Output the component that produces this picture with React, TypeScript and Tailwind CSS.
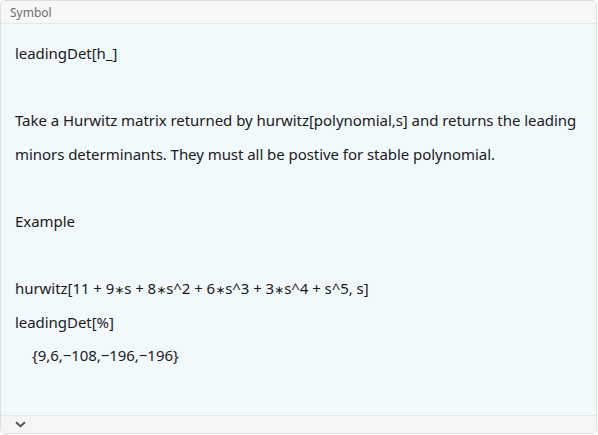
import React from 'react';

// small centred star used by the notebook for multiplication
const Star = () => <span className="font-['DejaVu_Sans',sans-serif] text-[12px]">∗</span>;

const App: React.FC = () => {
  const row = 'h-[33.6px] leading-[33.6px] whitespace-pre';

  return (
    <div className="w-[598px] h-[435px] bg-white">
      <div className="w-[597px] h-[434px] flex flex-col border border-[#dedede] rounded-[5px] overflow-hidden font-['Noto_Sans',sans-serif]">
        {/* Header */}
        <div className="h-[23px] shrink-0 bg-[#f7f7f7] border-b border-[#e4e8ea] flex items-center pl-[9px] pt-[2px]">
          <span className="text-[12px] text-[#6e6e6e]">Symbol</span>
        </div>

        {/* Body */}
        <div className="flex-1 bg-[#f2f9fd] pl-[14px] pt-[13px] text-[15px] text-[#1a1a1a] tracking-[-0.05px]">
          <div className={row}>leadingDet[h_]</div>
          <div className={row}></div>
          <div className={row}>Take a Hurwitz matrix returned by hurwitz[polynomial,s] and returns the leading</div>
          <div className={row}>minors determinants. They must all be postive for stable polynomial.</div>
          <div className={row}></div>
          <div className={row}>Example</div>
          <div className={row}></div>
          <div className={row}>
            hurwitz[11 + 9<Star />s + 8<Star />s^2 + 6<Star />s^3 + 3<Star />s^4 + s^5, s]
          </div>
          <div className={row}>leadingDet[%]</div>
          <div className={`${row} pl-[17px]`}>{'{9,6,−108,−196,−196}'}</div>
        </div>

        {/* Footer */}
        <div className="h-[18px] shrink-0 bg-[#f5f5f5] border-t border-[#e4e8ea] flex items-center pl-[14px]">
          <svg width="11" height="7" viewBox="0 0 11 7">
            <path d="M1 1.2 L5.5 5.2 L10 1.2" fill="none" stroke="#555" strokeWidth="2" />
          </svg>
        </div>
      </div>
    </div>
  );
};

export default App;
